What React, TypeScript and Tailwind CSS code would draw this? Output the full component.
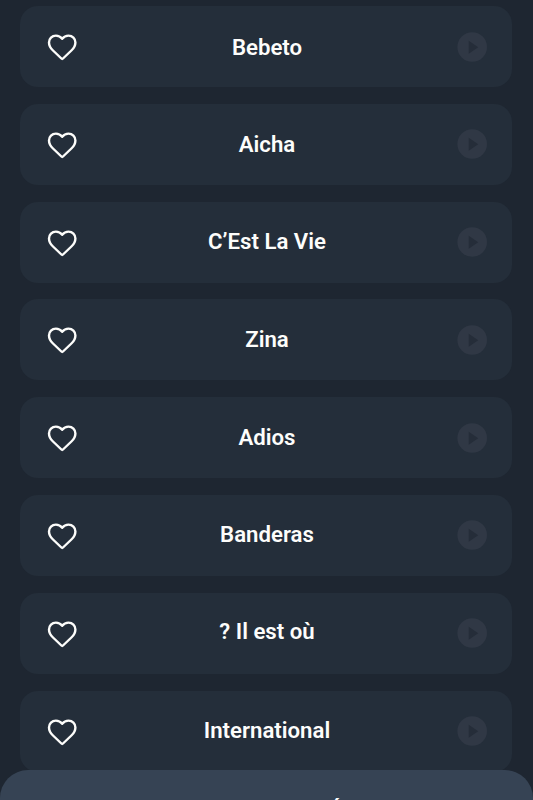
const tracks = [
  { title: "Bebeto", align: "pt-[2px]" },
  { title: "Aicha", align: "" },
  { title: "C’Est La Vie", align: "pb-px" },
  { title: "Zina", align: "pb-px" },
  { title: "Adios", align: "pb-px" },
  { title: "Banderas", align: "pb-[2px]" },
  { title: "? Il est où", align: "pb-[3px]" },
  { title: "International", align: "pb-px" },
];

const HeartIcon = () => (
  <svg width="30" height="28" viewBox="0 0 30 28" fill="none" stroke="#fdfdfb" strokeWidth="2.4" strokeLinejoin="round" strokeLinecap="round">
    <path d="M15.2 5.8C13.6 3.7 11.4 2.6 8.9 2.6C5 2.6 2 5.6 2 9.4C2 12.7 3.4 15 6 17.5L14.4 25.5C14.9 26 15.5 26 16 25.5L24.4 17.5C27 15 28.4 12.7 28.4 9.4C28.4 5.6 25.4 2.6 21.5 2.6C19 2.6 16.8 3.7 15.2 5.8Z" />
  </svg>
);

const PlayIcon = () => (
  <svg width="30" height="30" viewBox="0 0 30 30">
    <circle cx="15.2" cy="15" r="14.8" fill="#303845" />
    <path d="M11.7 8.7V21.7L21.2 15.2Z" fill="#252d39" />
  </svg>
);

const TrackCard = ({ title, align }: { title: string; align: string }) => (
  <li className="grid h-[81px] shrink-0 grid-cols-[30px_1fr_30px] items-center rounded-[18px] bg-[#242e3a] pl-[27px] pr-[25px]">
    <button type="button" aria-label="Favorite" className="pt-px">
      <HeartIcon />
    </button>
    <span className={`${align} text-center text-[22.2px] font-semibold text-[#fdfdfb]`}>{title}</span>
    <button type="button" aria-label="Play">
      <PlayIcon />
    </button>
  </li>
);

const App = () => {
  return (
    <main className="relative h-screen overflow-hidden bg-[#1e2631] font-['Roboto',sans-serif]">
      <ul className="flex flex-col gap-[16.8px] pt-1.5 pl-5 pr-[21px]">
        {tracks.map((track) => (
          <TrackCard key={track.title} {...track} />
        ))}
      </ul>

      {/* Player sheet, mostly below the fold */}
      <section className="absolute inset-x-0 top-[770px] h-24 rounded-t-[28px] bg-[#364354]">
        <p className="pt-[25px] pl-[138px] text-center text-[22px] leading-[26px] font-semibold text-white">í</p>
      </section>
    </main>
  );
};

export default App;
